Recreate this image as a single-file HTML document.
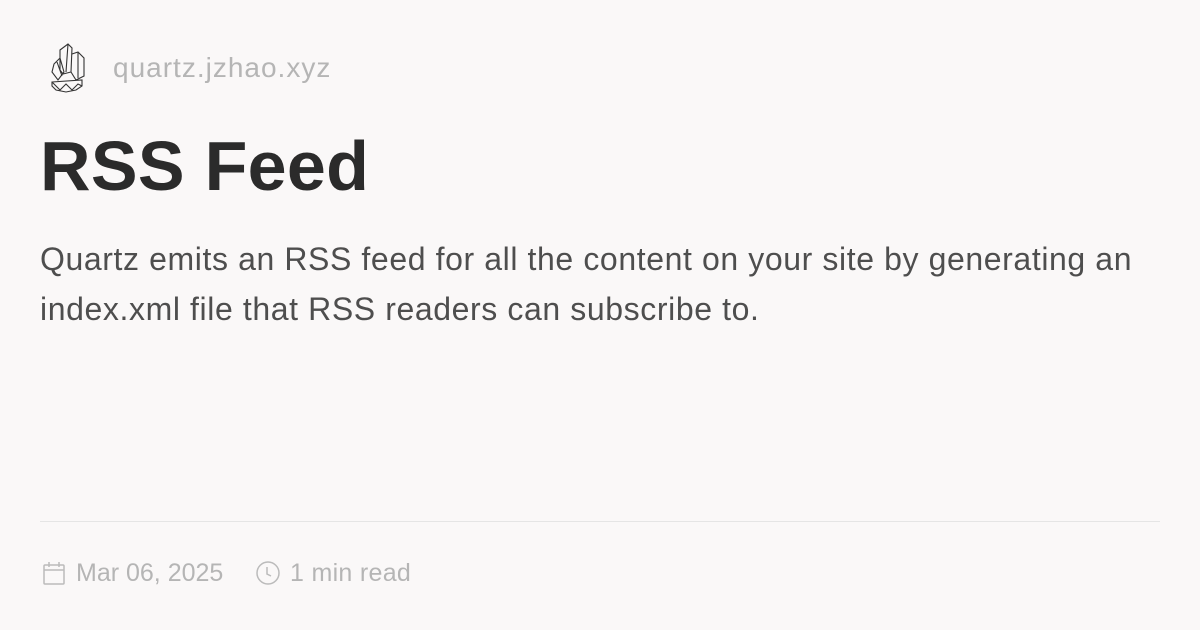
<!DOCTYPE html>
<html><head><style>
body{margin:0;width:1200px;height:630px;background:#faf8f8;font-family:"Liberation Sans",sans-serif;position:relative;overflow:hidden}
.site{position:absolute;left:113px;top:52px;font-size:28px;letter-spacing:1px;color:#b5b5b5}
h1{position:absolute;left:40px;top:126px;margin:0;font-size:70px;font-weight:bold;color:#2b2b2b;letter-spacing:0.3px}
p{position:absolute;left:40px;top:234px;margin:0;width:1150px;font-size:32px;line-height:50px;color:#4e4e4e;letter-spacing:0.6px}
.hr{position:absolute;left:40px;top:521px;width:1120px;height:1px;background:#e5e5e5}
.meta{position:absolute;top:559px;font-size:25px;color:#b5b5b5}
</style></head><body>
<svg style="position:absolute;left:48px;top:42px" width="40" height="52" viewBox="0 0 40 52" fill="none" stroke="#333" stroke-width="1.1">
<path d="M12 8 L20 2 L24 6 L23 30 L15 32 L12 28 Z M20 2 L18 30 M24 12 L30 10 L36 16 L36 34 L28 38 L23 30 M30 10 L30 36 M6 22 L12 16 L16 30 L10 38 L4 30 Z M9 20 L14 34 M4 40 L34 38 L34 44 L28 48 L18 50 L8 48 L4 44 Z M4 40 L12 48 L18 42 L24 48 L30 42 L34 44"/></svg>
<div class="site">quartz.jzhao.xyz</div>
<h1>RSS Feed</h1>
<p>Quartz emits an RSS feed for all the content on your site by generating an index.xml file that RSS readers can subscribe to.</p>
<div class="hr"></div>
<svg style="position:absolute;left:43px;top:561px" width="22" height="24" viewBox="0 0 22 24" fill="none" stroke="#bbb" stroke-width="1.5"><rect x="1" y="4" width="20" height="19" rx="1"/><path d="M1 9H21M6 1V6M16 1V6"/></svg>
<div class="meta" style="left:76px">Mar 06, 2025</div>
<svg style="position:absolute;left:256px;top:561px" width="24" height="24" viewBox="0 0 24 24" fill="none" stroke="#bbb" stroke-width="1.5"><circle cx="12" cy="12" r="11"/><path d="M11 6V13L15 15"/></svg>
<div class="meta" style="left:290px;letter-spacing:0.3px">1 min read</div>
</body></html>
